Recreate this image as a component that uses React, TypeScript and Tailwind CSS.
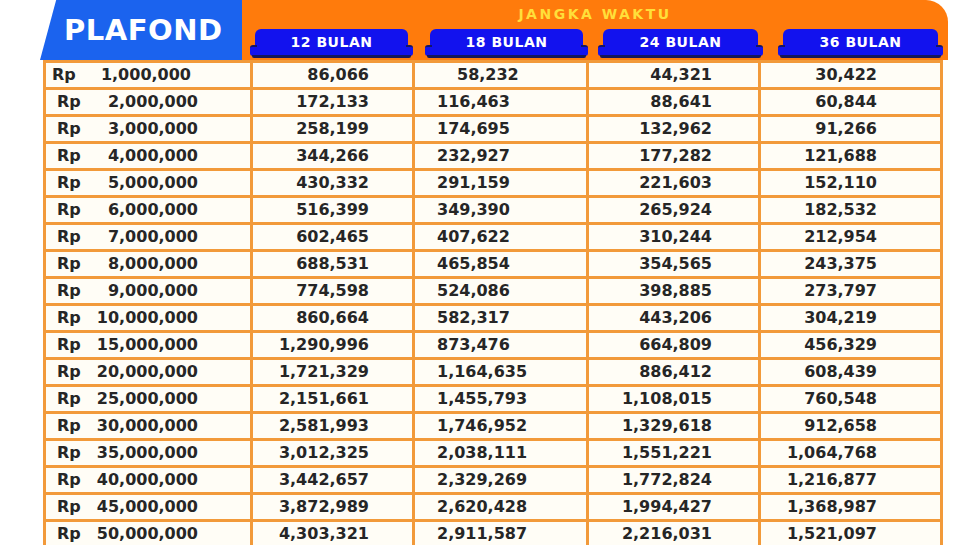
import React from "react";

const rows: string[][] = [
  ["1,000,000", "86,066", "58,232", "44,321", "30,422"],
  ["2,000,000", "172,133", "116,463", "88,641", "60,844"],
  ["3,000,000", "258,199", "174,695", "132,962", "91,266"],
  ["4,000,000", "344,266", "232,927", "177,282", "121,688"],
  ["5,000,000", "430,332", "291,159", "221,603", "152,110"],
  ["6,000,000", "516,399", "349,390", "265,924", "182,532"],
  ["7,000,000", "602,465", "407,622", "310,244", "212,954"],
  ["8,000,000", "688,531", "465,854", "354,565", "243,375"],
  ["9,000,000", "774,598", "524,086", "398,885", "273,797"],
  ["10,000,000", "860,664", "582,317", "443,206", "304,219"],
  ["15,000,000", "1,290,996", "873,476", "664,809", "456,329"],
  ["20,000,000", "1,721,329", "1,164,635", "886,412", "608,439"],
  ["25,000,000", "2,151,661", "1,455,793", "1,108,015", "760,548"],
  ["30,000,000", "2,581,993", "1,746,952", "1,329,618", "912,658"],
  ["35,000,000", "3,012,325", "2,038,111", "1,551,221", "1,064,768"],
  ["40,000,000", "3,442,657", "2,329,269", "1,772,824", "1,216,877"],
  ["45,000,000", "3,872,989", "2,620,428", "1,994,427", "1,368,987"],
  ["50,000,000", "4,303,321", "2,911,587", "2,216,031", "1,521,097"],
];

function Tab({ label, className }: { label: string; className: string }) {
  return (
    <div className={"relative h-[29px] " + className}>
      <div className="mx-[5px] h-[27px] rounded-t-[6px] bg-[#1212ee] flex items-center justify-center text-white text-[14px] font-bold tracking-[0.5px]">
        {label}
      </div>
      <div className="absolute left-0 bottom-[2px] w-[7px] h-[11px] bg-[#1212ee] rounded-l-[3px] border-t-2 border-[#141466]" />
      <div className="absolute right-0 bottom-[2px] w-[7px] h-[11px] bg-[#1212ee] rounded-r-[3px] border-t-2 border-[#141466]" />
      <div className="absolute left-[2px] right-[2px] bottom-0 h-[3px] bg-[#17175a] rounded-b-[2px]" />
    </div>
  );
}

export default function App() {
  return (
    <div
      className="w-[970px] h-[545px] bg-white overflow-hidden"
      style={{ fontFamily: '"DejaVu Sans", Verdana, sans-serif' }}
    >
      <div className="ml-[40px] w-[908px] flex h-[60px]">
        <div className="w-[202px] h-[60px] bg-[#1b63ee] [clip-path:polygon(8%_0,100%_0,100%_100%,0_100%)] flex items-center pl-[24px]">
          <span className="text-white font-bold text-[29px] tracking-[0.5px] leading-none">PLAFOND</span>
        </div>
        <div className="flex-1 bg-[#ff7b0c] rounded-tr-[22px] flex flex-col">
          <div className="h-[29px] flex items-center justify-center">
            <span className="text-[#ffdf3a] font-bold text-[14px] tracking-[2.5px]">JANGKA WAKTU</span>
          </div>
          <div className="flex items-end">
            <Tab label="12 BULAN" className="ml-[8px] w-[163px]" />
            <Tab label="18 BULAN" className="ml-[12px] w-[163px]" />
            <Tab label="24 BULAN" className="ml-[10px] w-[165px]" />
            <Tab label="36 BULAN" className="ml-[15px] w-[165px]" />
          </div>
        </div>
      </div>
      <div className="ml-[43px] w-[900px] bg-[#f29a3a] p-[3px] grid grid-cols-[204px_159px_171px_169px_179px] gap-x-[3px] gap-y-[3px]">
        {rows.map((r, i) => (
          <React.Fragment key={i}>
            <div
              className="h-[24px] bg-[#fffdf6] flex items-center justify-between text-[16px] font-bold text-[#262626] leading-none"
              style={{ paddingLeft: i === 0 ? 6 : 11, paddingRight: i === 0 ? 59 : 52 }}
            >
              <span>Rp</span>
              <span>{r[0]}</span>
            </div>
            <div className="h-[24px] bg-[#fffdf6] flex items-center justify-end pr-[43px] text-[16px] font-bold text-[#262626] leading-none">
              {r[1]}
            </div>
            <div
              className="h-[24px] bg-[#fffdf6] flex items-center text-[16px] font-bold text-[#262626] leading-none"
              style={{ paddingLeft: i === 0 ? 42 : 22 }}
            >
              {r[2]}
            </div>
            <div className="h-[24px] bg-[#fffdf6] flex items-center justify-end pr-[46px] text-[16px] font-bold text-[#262626] leading-none">
              {r[3]}
            </div>
            <div className="h-[24px] bg-[#fffdf6] flex items-center justify-end pr-[63px] text-[16px] font-bold text-[#262626] leading-none">
              {r[4]}
            </div>
          </React.Fragment>
        ))}
      </div>
    </div>
  );
}
